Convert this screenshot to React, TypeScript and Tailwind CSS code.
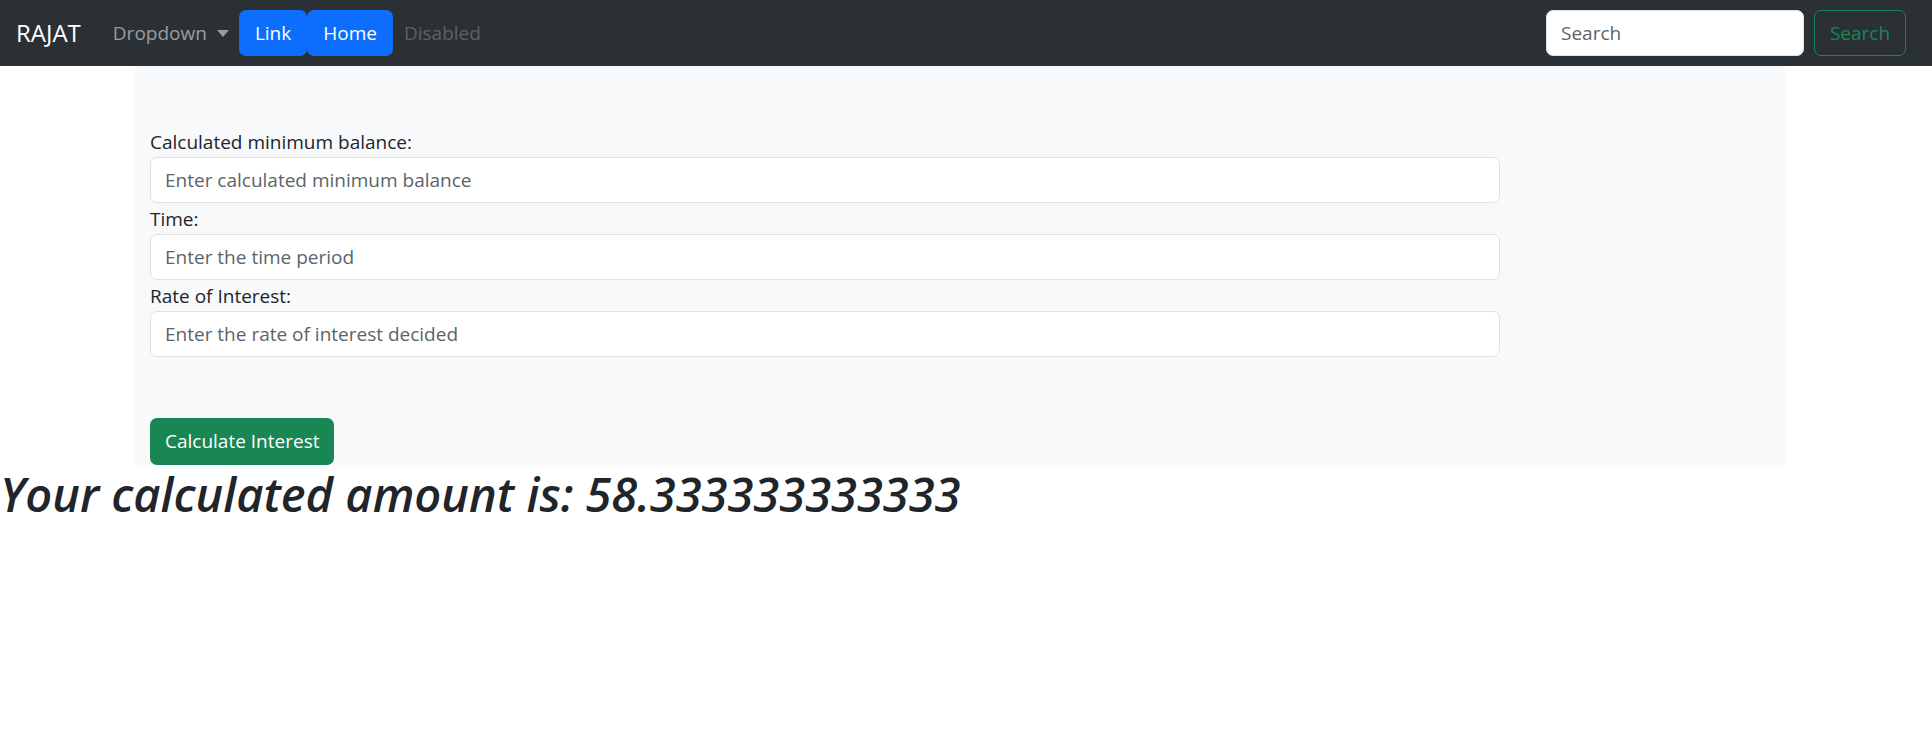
const navLinks = [
  { label: "Link", active: true },
  { label: "Home", active: true },
];

const fields = [
  { label: "Calculated minimum balance:", placeholder: "Enter calculated minimum balance" },
  { label: "Time:", placeholder: "Enter the time period" },
  { label: "Rate of Interest:", placeholder: "Enter the rate of interest decided" },
];

export default function App() {
  return (
    <div className="min-h-screen bg-white text-[#212529] font-['Open_Sans',sans-serif]">
      {/* Navbar */}
      <nav className="h-[66px] bg-[#2b3035] flex items-center pl-[16px] pr-[26px]">
        <a className="text-[24px] text-white mr-[22px] leading-none">RAJAT</a>
        <div className="flex items-center h-[46px]">
          <button className="flex items-center gap-[10px] px-[10px] text-[19px] text-[#9a9da0] h-full">
            Dropdown
            <span className="w-0 h-0 border-l-[6px] border-r-[6px] border-t-[7px] border-l-transparent border-r-transparent border-t-[#9a9da0]" />
          </button>
          {navLinks.map((item) => (
            <a
              key={item.label}
              className="h-full flex items-center px-[16px] rounded-[7px] bg-[#0d6efd] text-white text-[19px]"
            >
              {item.label}
            </a>
          ))}
          <span className="px-[11px] text-[19px] text-[#5d6165]">Disabled</span>
        </div>
        <div className="ml-auto flex items-center gap-[10px]">
          <input
            className="w-[258px] h-[46px] rounded-[7px] bg-white border border-[#dee2e6] px-[14px] text-[19px] placeholder:text-[#5c636a] outline-none"
            placeholder="Search"
          />
          <button className="w-[92px] h-[46px] rounded-[7px] border border-[#198754] text-[#198754] text-[19px]">
            Search
          </button>
        </div>
      </nav>

      {/* Form area */}
      <div className="ml-[135px] w-[1650px] bg-[#f8f9fa] pt-[60px] pl-[15px]">
        {fields.map((f) => (
          <div key={f.label} className="w-[1350px]">
            <label className="block text-[19px] leading-[29px] mt-[2px]">{f.label}</label>
            <input
              className="block w-full h-[46px] rounded-[7px] bg-white border border-[#dee2e6] px-[14px] text-[19px] placeholder:text-[#5c636a] outline-none"
              placeholder={f.placeholder}
            />
          </div>
        ))}
        <button className="mt-[61px] h-[47px] px-[15px] rounded-[7px] bg-[#198754] text-white text-[19px]">
          Calculate Interest
        </button>
      </div>

      <h1 className="text-[47px] italic font-semibold leading-[1.25]">
        Your calculated amount is: 58.333333333333
      </h1>
    </div>
  );
}
